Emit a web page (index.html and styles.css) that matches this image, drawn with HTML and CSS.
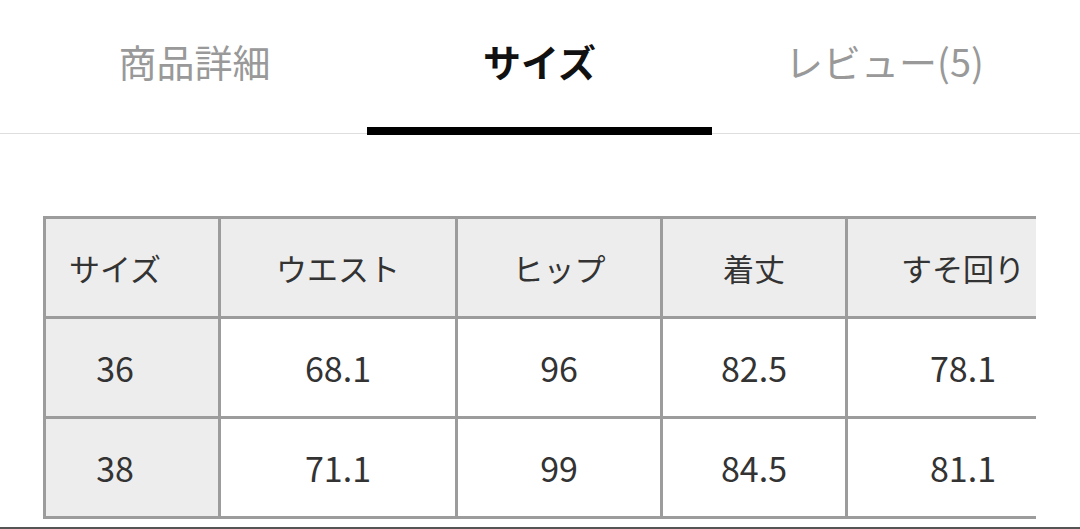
FILE: index.html
```html
<!DOCTYPE html>
<html lang="ja">
<head>
<meta charset="utf-8">
<title>サイズ</title>
<link rel="stylesheet" href="styles.css">
</head>
<body>
<nav class="tabs">
  <div class="tab">商品詳細</div>
  <div class="tab active">サイズ</div>
  <div class="tab">レビュー(5)</div>
</nav>
<section class="size-area">
  <div class="table-wrap">
    <table class="size-table">
      <colgroup>
        <col class="c1"><col class="c2"><col class="c3"><col class="c4"><col class="c5">
      </colgroup>
      <thead>
        <tr><th class="first">サイズ</th><th>ウエスト</th><th>ヒップ</th><th>着丈</th><th>すそ回り</th></tr>
      </thead>
      <tbody>
        <tr><th class="first num">36</th><td>68.1</td><td>96</td><td>82.5</td><td>78.1</td></tr>
        <tr><th class="first num">38</th><td>71.1</td><td>99</td><td>84.5</td><td>81.1</td></tr>
      </tbody>
    </table>
  </div>
</section>
<div class="bottom-rule"></div>
</body>
</html>
```
FILE: styles.css
```css
html, body {
  margin: 0;
  padding: 0;
  background: #ffffff;
}
body {
  width: 1080px;
  height: 529px;
  overflow: hidden;
  font-family: "Noto Sans CJK JP", "Noto Sans", sans-serif;
  color: #333333;
}
.tabs {
  display: flex;
  height: 133px;
  padding: 0 23px 0 22px;
  border-bottom: 1px solid #dedede;
}
.tab {
  flex: 1 1 0;
  display: flex;
  align-items: center;
  justify-content: center;
  font-size: 38px;
  color: #999999;
  padding-bottom: 6px;
  box-sizing: border-box;
  border-bottom: 8px solid transparent;
  margin-bottom: -2px;
  line-height: 1;
}
.tab.active {
  color: #111111;
  font-weight: 700;
  border-bottom-color: #000000;
}
.size-area {
  padding: 82px 0 0 43px;
}
.table-wrap {
  width: 993px;
  overflow: hidden;
}
.size-table {
  table-layout: fixed;
  width: 1038px;
  border-collapse: separate;
  border-spacing: 0;
  border-top: 3px solid #9c9c9c;
  border-left: 3px solid #9c9c9c;
}
.c1 { width: 175px; }
.c2 { width: 237px; }
.c3 { width: 205px; }
.c4 { width: 185px; }
.c5 { width: 233px; }
.size-table th,
.size-table td {
  height: 100px;
  padding: 0;
  box-sizing: border-box;
  border-right: 3px solid #9c9c9c;
  border-bottom: 3px solid #9c9c9c;
  text-align: center;
  vertical-align: middle;
  font-size: 31px;
  font-weight: 400;
  color: #333333;
  line-height: 1;
}
.size-table thead th {
  background: #ededed;
}
.size-table th.first {
  background: #ededed;
  padding-right: 34px;
}
.size-table td,
.size-table th.num {
  font-size: 34px;
}
.size-table td {
  background: #ffffff;
}
.bottom-rule {
  margin-top: 8px;
  height: 2px;
  background: #555555;
}
```
